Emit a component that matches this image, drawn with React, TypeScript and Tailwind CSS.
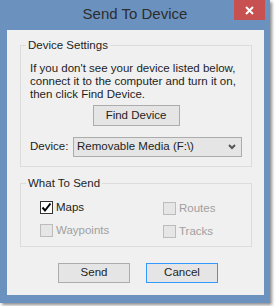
import { FC, ReactNode } from 'react';

const font = { fontFamily: '"Liberation Sans", Arial, sans-serif' };

const GroupBox: FC<{ title: string; className: string; children: ReactNode }> = ({ title, className, children }) => (
  <div className={`relative border border-[#dcdcdc] ${className}`}>
    <span className="absolute -top-[8px] left-[5px] bg-[#f0f0f0] px-[2px] text-[11.5px] leading-[15px] text-[#1e1e1e]">
      {title}
    </span>
    {children}
  </div>
);

const CheckBox: FC<{ label: string; checked?: boolean; disabled?: boolean }> = ({ label, checked, disabled }) => (
  <div className="flex items-center gap-[3px] h-[13px]">
    <div
      className={`w-[13px] h-[13px] border flex items-center justify-center ${
        disabled ? 'border-[#bcbcbc] bg-[#e6e6e6]' : 'border-[#333333] bg-white'
      }`}
    >
      {checked && (
        <svg width="11" height="11" viewBox="0 0 11 11">
          <path d="M1.5 5.5 L4 8.5 L9.5 1.5" fill="none" stroke="#000" strokeWidth="2" />
        </svg>
      )}
    </div>
    <span className={`text-[11.5px] leading-[15px] ${disabled ? 'text-[#a0a0a0]' : 'text-[#1e1e1e]'}`}>{label}</span>
  </div>
);

const App: FC = () => {
  return (
    <div className="w-[275px] h-[306px] bg-white" style={font}>
      <div className="w-[270px] h-[303px] bg-[#6b92be] shadow-[2px_2px_3px_rgba(0,0,0,0.45)] flex flex-col">
        {/* Title bar */}
        <div className="relative h-[30px] flex items-center justify-center">
          <span className="text-[15px] text-[#2d2d2d] -mt-[2px]">Send To Device</span>
          <div className="absolute top-0 right-[5px] w-[31px] h-[20px] bg-[#c75050] flex items-center justify-center">
            <svg width="9" height="9" viewBox="0 0 9 9">
              <path d="M1 1 L8 8 M8 1 L1 8" stroke="#fff" strokeWidth="2" />
            </svg>
          </div>
        </div>

        {/* Client area */}
        <div className="ml-[7px] w-[257px] h-[265px] bg-[#f0f0f0] pt-[15px] pl-[13px]">
          <GroupBox title="Device Settings" className="w-[232px] h-[122px] pt-[16px] pl-[9px]">
            <p className="text-[11.5px] leading-[13px] text-[#1e1e1e]">
              If you don&apos;t see your device listed below,
              <br />
              connect it to the computer and turn it on,
              <br />
              then click Find Device.
            </p>
            <div className="flex justify-center pr-[9px] mt-[4px]">
              <button className="w-[87px] h-[21px] border border-[#acacac] bg-[#e5e5e5] text-[11.5px] text-[#1e1e1e]">
                Find Device
              </button>
            </div>
            <div className="flex items-center mt-[11px]">
              <span className="w-[43px] text-[11.5px] text-[#1e1e1e]">Device:</span>
              <div className="w-[169px] h-[20px] border border-[#acacac] bg-[#e5e5e5] flex items-center justify-between pl-[3px] pr-[5px]">
                <span className="text-[11.5px] text-[#1e1e1e]">Removable Media (F:\)</span>
                <svg width="8" height="6" viewBox="0 0 8 6">
                  <path d="M1 1 L4 4 L7 1" fill="none" stroke="#555" strokeWidth="2" />
                </svg>
              </div>
            </div>
          </GroupBox>

          <GroupBox title="What To Send" className="mt-[16px] w-[232px] h-[64px] pt-[17px] pl-[19px]">
            <div className="grid grid-cols-[123px_1fr] gap-y-[9px]">
              <CheckBox label="Maps" checked />
              <div className="mt-[1px]">
                <CheckBox label="Routes" disabled />
              </div>
              <CheckBox label="Waypoints" disabled />
              <div className="mt-[1px]">
                <CheckBox label="Tracks" disabled />
              </div>
            </div>
          </GroupBox>

          <div className="flex gap-[16px] mt-[16px] ml-[38px]">
            <button className="w-[72px] h-[20px] border border-[#acacac] bg-[#e5e5e5] text-[11.5px] text-[#1e1e1e]">
              Send
            </button>
            <button className="w-[72px] h-[20px] border border-[#3399ff] bg-[#e5e5e5] text-[11.5px] text-[#1e1e1e]">
              Cancel
            </button>
          </div>
        </div>
      </div>
    </div>
  );
};

export default App;
